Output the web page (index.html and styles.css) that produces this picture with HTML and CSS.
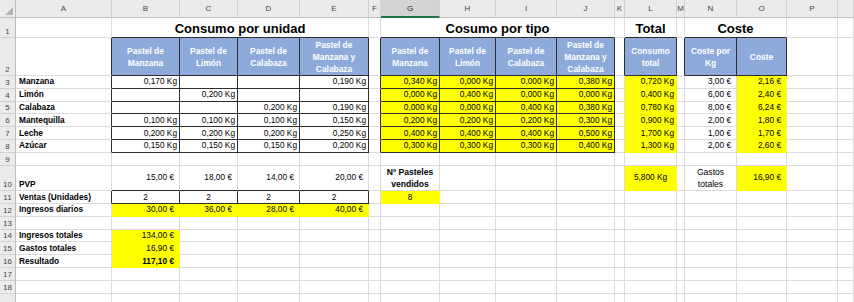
FILE: index.html
```html
<!DOCTYPE html>
<html lang="es">
<head>
<meta charset="utf-8">
<title>Pasteles</title>
<link rel="stylesheet" href="styles.css">
</head>
<body>
<table class="sheet">
<colgroup>
<col class="w-rh"><col class="w-a"><col class="w-b"><col class="w-c"><col class="w-d"><col class="w-e"><col class="w-f"><col class="w-g"><col class="w-h"><col class="w-i"><col class="w-j"><col class="w-k"><col class="w-l"><col class="w-m"><col class="w-n"><col class="w-o"><col class="w-p"><col class="w-q">
</colgroup>
<tr class="r-head">
<th class="corner"><span class="tri"></span></th><th class="ch">A</th><th class="ch">B</th><th class="ch">C</th><th class="ch">D</th><th class="ch">E</th><th class="ch">F</th><th class="ch sel">G</th><th class="ch">H</th><th class="ch">I</th><th class="ch">J</th><th class="ch">K</th><th class="ch">L</th><th class="ch">M</th><th class="ch">N</th><th class="ch">O</th><th class="ch">P</th><th class="ch"></th>
</tr>
<tr class="r-1">
<th class="rh">1</th><td></td><td colspan="4" class="title db">Consumo por unidad</td><td></td><td colspan="4" class="title db">Cosumo por tipo</td><td></td><td class="title db">Total</td><td></td><td colspan="2" class="title db">Coste</td><td></td><td></td>
</tr>
<tr class="r-2">
<th class="rh">2</th><td class="dr"></td>
<td class="hd">Pastel de<br>Manzana</td><td class="hd">Pastel de<br>Limón</td><td class="hd">Pastel de<br>Calabaza</td><td class="hd">Pastel de<br>Manzana y<br>Calabaza</td>
<td class="dr"></td>
<td class="hd">Pastel de<br>Manzana</td><td class="hd">Pastel de<br>Limón</td><td class="hd">Pastel de<br>Calabaza</td><td class="hd">Pastel de<br>Manzana y<br>Calabaza</td>
<td class="dr"></td><td class="hd">Consumo<br>total</td><td class="dr"></td><td class="hd">Coste por<br>Kg</td><td class="hd">Coste</td><td></td><td></td>
</tr>
<tr class="r-d">
<th class="rh">3</th><td class="lab dr">Manzana</td>
<td class="bx kg">0,170 Kg</td><td class="bx"></td><td class="bx"></td><td class="bx kg">0,190 Kg</td><td class="dr"></td>
<td class="y bx kg">0,340 Kg</td><td class="y bx kg">0,000 Kg</td><td class="y bx kg">0,000 Kg</td><td class="y bx kg">0,380 Kg</td><td></td>
<td class="y kg">0,720 Kg</td><td></td><td class="eur">3,00 €</td><td class="y eur">2,16 €</td><td></td><td></td>
</tr>
<tr class="r-d">
<th class="rh">4</th><td class="lab dr">Limón</td>
<td class="bx"></td><td class="bx kg">0,200 Kg</td><td class="bx"></td><td class="bx"></td><td class="dr"></td>
<td class="y bx kg">0,000 Kg</td><td class="y bx kg">0,400 Kg</td><td class="y bx kg">0,000 Kg</td><td class="y bx kg">0,000 Kg</td><td></td>
<td class="y kg">0,400 Kg</td><td></td><td class="eur">6,00 €</td><td class="y eur">2,40 €</td><td></td><td></td>
</tr>
<tr class="r-d">
<th class="rh">5</th><td class="lab dr">Calabaza</td>
<td class="bx"></td><td class="bx"></td><td class="bx kg">0,200 Kg</td><td class="bx kg">0,190 Kg</td><td class="dr"></td>
<td class="y bx kg">0,000 Kg</td><td class="y bx kg">0,000 Kg</td><td class="y bx kg">0,400 Kg</td><td class="y bx kg">0,380 Kg</td><td></td>
<td class="y kg">0,780 Kg</td><td></td><td class="eur">8,00 €</td><td class="y eur">6,24 €</td><td></td><td></td>
</tr>
<tr class="r-d">
<th class="rh">6</th><td class="lab dr">Mantequilla</td>
<td class="bx kg">0,100 Kg</td><td class="bx kg">0,100 Kg</td><td class="bx kg">0,100 Kg</td><td class="bx kg">0,150 Kg</td><td class="dr"></td>
<td class="y bx kg">0,200 Kg</td><td class="y bx kg">0,200 Kg</td><td class="y bx kg">0,200 Kg</td><td class="y bx kg">0,300 Kg</td><td></td>
<td class="y kg">0,900 Kg</td><td></td><td class="eur">2,00 €</td><td class="y eur">1,80 €</td><td></td><td></td>
</tr>
<tr class="r-d">
<th class="rh">7</th><td class="lab dr">Leche</td>
<td class="bx kg">0,200 Kg</td><td class="bx kg">0,200 Kg</td><td class="bx kg">0,200 Kg</td><td class="bx kg">0,250 Kg</td><td class="dr"></td>
<td class="y bx kg">0,400 Kg</td><td class="y bx kg">0,400 Kg</td><td class="y bx kg">0,400 Kg</td><td class="y bx kg">0,500 Kg</td><td></td>
<td class="y kg">1,700 Kg</td><td></td><td class="eur">1,00 €</td><td class="y eur">1,70 €</td><td></td><td></td>
</tr>
<tr class="r-d">
<th class="rh">8</th><td class="lab dr">Azúcar</td>
<td class="bx kg">0,150 Kg</td><td class="bx kg">0,150 Kg</td><td class="bx kg">0,150 Kg</td><td class="bx kg">0,200 Kg</td><td class="dr"></td>
<td class="y bx kg">0,300 Kg</td><td class="y bx kg">0,300 Kg</td><td class="y bx kg">0,300 Kg</td><td class="y bx kg">0,400 Kg</td><td></td>
<td class="y kg">1,300 Kg</td><td></td><td class="eur">2,00 €</td><td class="y eur">2,60 €</td><td></td><td></td>
</tr>
<tr class="r-d">
<th class="rh">9</th><td></td><td></td><td></td><td></td><td></td><td></td><td></td><td></td><td></td><td></td><td></td><td></td><td></td><td></td><td></td><td></td><td></td>
</tr>
<tr class="r-10">
<th class="rh">10</th><td class="lab">PVP</td>
<td class="eur mid db">15,00 €</td><td class="eur mid db">18,00 €</td><td class="eur mid db">14,00 €</td><td class="eur mid db">20,00 €</td><td></td>
<td class="ctr b mid tall">Nº Pasteles<br>vendidos</td><td></td><td></td><td></td><td></td>
<td class="y ctr mid">5,800 Kg</td><td></td><td class="ctr mid tall">Gastos<br>totales</td><td class="y eur mid">16,90 €</td><td></td><td></td>
</tr>
<tr class="r-d">
<th class="rh">11</th><td class="lab dr">Ventas (Unidades)</td>
<td class="bx ctr">2</td><td class="bx ctr">2</td><td class="bx ctr">2</td><td class="bx ctr">2</td><td></td>
<td class="y ctr">8</td><td></td><td></td><td></td><td></td><td></td><td></td><td></td><td></td><td></td><td></td>
</tr>
<tr class="r-d">
<th class="rh">12</th><td class="lab">Ingresos diarios</td>
<td class="y eur">30,00 €</td><td class="y eur">36,00 €</td><td class="y eur">28,00 €</td><td class="y eur">40,00 €</td><td></td>
<td></td><td></td><td></td><td></td><td></td><td></td><td></td><td></td><td></td><td></td><td></td>
</tr>
<tr class="r-d">
<th class="rh">13</th><td></td><td></td><td></td><td></td><td></td><td></td><td></td><td></td><td></td><td></td><td></td><td></td><td></td><td></td><td></td><td></td><td></td>
</tr>
<tr class="r-d">
<th class="rh">14</th><td class="lab">Ingresos totales</td><td class="y eur">134,00 €</td><td></td><td></td><td></td><td></td><td></td><td></td><td></td><td></td><td></td><td></td><td></td><td></td><td></td><td></td><td></td>
</tr>
<tr class="r-d">
<th class="rh">15</th><td class="lab">Gastos totales</td><td class="y eur">16,90 €</td><td></td><td></td><td></td><td></td><td></td><td></td><td></td><td></td><td></td><td></td><td></td><td></td><td></td><td></td><td></td>
</tr>
<tr class="r-d">
<th class="rh">16</th><td class="lab">Resultado</td><td class="y eur b">117,10 €</td><td></td><td></td><td></td><td></td><td></td><td></td><td></td><td></td><td></td><td></td><td></td><td></td><td></td><td></td><td></td>
</tr>
<tr class="r-d">
<th class="rh">17</th><td></td><td></td><td></td><td></td><td></td><td></td><td></td><td></td><td></td><td></td><td></td><td></td><td></td><td></td><td></td><td></td><td></td>
</tr>
<tr class="r-d">
<th class="rh">18</th><td></td><td></td><td></td><td></td><td></td><td></td><td></td><td></td><td></td><td></td><td></td><td></td><td></td><td></td><td></td><td></td><td></td>
</tr>
<tr class="r-d">
<th class="rh"></th><td></td><td></td><td></td><td></td><td></td><td></td><td></td><td></td><td></td><td></td><td></td><td></td><td></td><td></td><td></td><td></td><td></td>
</tr>
</table>
</body>
</html>
```
FILE: styles.css
```css
html, body {
  margin: 0;
  padding: 0;
  background: #ffffff;
  overflow: hidden;
  width: 854px;
  height: 302px;
}
body {
  font-family: "Liberation Sans", Arial, sans-serif;
  font-size: 8.3px;
  color: #000;
}
.sheet {
  border-collapse: separate;
  border-spacing: 0;
  table-layout: fixed;
  width: 854px;
}
.w-rh { width: 16px; }
.w-a { width: 96px; }
.w-b { width: 68px; }
.w-c { width: 58px; }
.w-d { width: 62px; }
.w-e { width: 69px; }
.w-f { width: 12px; }
.w-g { width: 59px; }
.w-h { width: 56px; }
.w-i { width: 61px; }
.w-j { width: 58px; }
.w-k { width: 10px; }
.w-l { width: 52px; }
.w-m { width: 8px; }
.w-n { width: 52px; }
.w-o { width: 50px; }
.w-p { width: 51px; }
.w-q { width: 16px; }

.sheet td, .sheet th {
  box-sizing: border-box;
  padding: 0;
  border-right: 1px solid #dcdcdc;
  border-bottom: 1px solid #dcdcdc;
  white-space: nowrap;
  overflow: hidden;
  line-height: 11px;
  vertical-align: middle;
  font-weight: normal;
}
.r-head { height: 18px; }
.r-1 { height: 20px; }
.r-2 { height: 38px; }
.r-d { height: 12.8px; }
.r-10 { height: 25.6px; }

.sheet .ch {
  background: #ebebeb;
  color: #444;
  font-size: 8px;
  text-align: center;
  border-right-color: #d2d2d2;
  border-bottom-color: #bdbdbd;
}
.sheet .ch.sel {
  background: #d4d4d4;
  color: #1e1e1e;
  border-bottom: 2px solid #217346;
}
.sheet .corner {
  background: #ebebeb;
  border-right-color: #bdbdbd;
  border-bottom-color: #bdbdbd;
  position: relative;
}
.tri {
  position: absolute;
  right: 2px;
  bottom: 2px;
  width: 0;
  height: 0;
  border-left: 8px solid transparent;
  border-bottom: 8px solid #b4b4b4;
}
.sheet .rh {
  background: #ebebeb;
  color: #444;
  font-size: 8px;
  text-align: center;
  vertical-align: bottom;
  border-right-color: #bdbdbd;
  border-bottom-color: #d2d2d2;
}
.sheet .title {
  font-size: 13px;
  font-weight: bold;
  text-align: center;
  vertical-align: bottom;
  line-height: 16px;
}
.sheet .hd {
  background: #8eaadb;
  color: #fff;
  font-weight: bold;
  font-size: 8.4px;
  line-height: 12px;
  text-align: center;
  border-right-color: #2e2e2e;
  border-bottom-color: #2e2e2e;
}
.sheet .lab {
  font-weight: bold;
  padding-left: 3px;
}
.sheet .r-10 .lab {
  vertical-align: bottom;
}
.sheet .kg {
  text-align: right;
  padding-right: 2px;
}
.sheet .eur {
  text-align: right;
  padding-right: 5px;
}
.sheet .ctr {
  text-align: center;
}
.sheet .b {
  font-weight: bold;
}
.sheet .mid {
  vertical-align: middle;
}
.sheet .tall {
  font-size: 8.6px;
  line-height: 12px;
}
.sheet .y {
  background: #ffff00;
  border-right-color: #ffff00;
  border-bottom-color: #ffff00;
}
.sheet .dr {
  border-right-color: #2e2e2e;
}
.sheet .db {
  border-bottom-color: #2e2e2e;
}
.sheet .bx {
  border-right-color: #2e2e2e;
  border-bottom-color: #2e2e2e;
}
```
